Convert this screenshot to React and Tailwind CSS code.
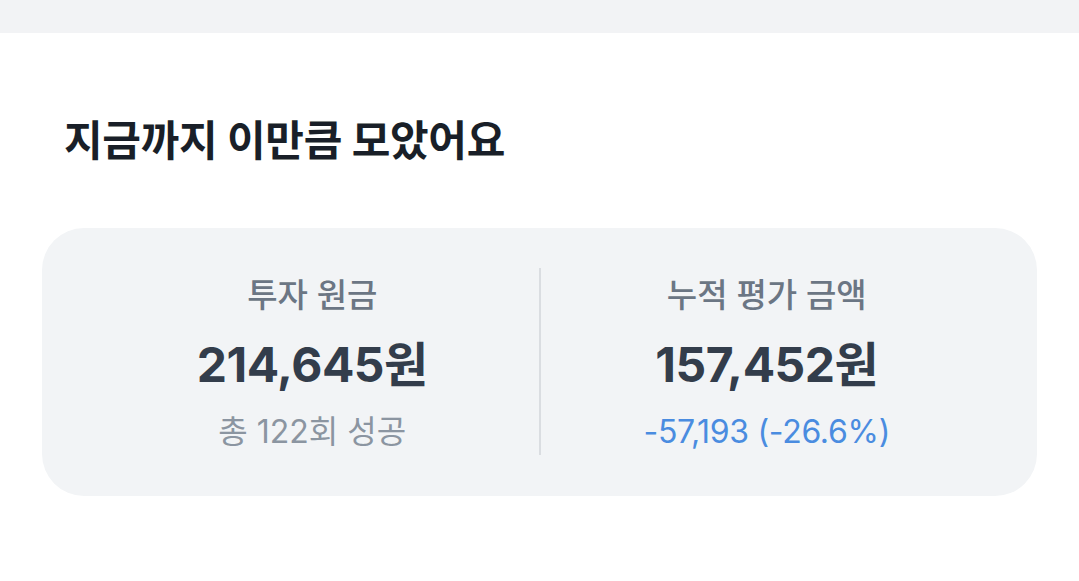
import React from "react";

const font = { fontFamily: '"Inter", "Noto Sans CJK KR", sans-serif' };

const SummaryCol = ({ label, amount, sub, subClass }) => (
  <div className="flex-1 flex flex-col items-center pt-[7px]">
    <span className="text-[33px] leading-[40px] text-[#6b7684] font-medium">{label}</span>
    <span className="mt-[22px] text-[48px] leading-[56px] font-bold text-[#333d4b] tracking-[-0.5px]">
      {amount}
    </span>
    <span className={`mt-[19px] text-[32px] leading-[40px] ${subClass}`}>{sub}</span>
  </div>
);

const App = () => {
  return (
    <div className="w-[1079px] h-[581px] bg-white overflow-hidden" style={font}>
      {/* top strip */}
      <div className="h-[33px] bg-[#f2f3f5]" />

      <div className="px-[42px]">
        <h2 className="mt-[83px] pl-[22px] text-[42px] leading-[50px] font-bold text-[#191f28] tracking-[-0.3px]">
          지금까지 이만큼 모았어요
        </h2>

        {/* Summary card */}
        <div className="mt-[62px] w-[995px] rounded-[42px] bg-[#f2f4f6] px-[44px] pt-[40px] pb-[41px] flex">
          <SummaryCol
            label="투자 원금"
            amount="214,645원"
            sub="총 122회 성공"
            subClass="text-[#8b95a1]"
          />
          <div className="w-[2px] h-[187px] bg-[#dadde1]" />
          <SummaryCol
            label="누적 평가 금액"
            amount="157,452원"
            sub="-57,193 (-26.6%)"
            subClass="text-[#4a8ce0] tracking-[-0.3px]"
          />
        </div>
      </div>
    </div>
  );
};

export default App;
